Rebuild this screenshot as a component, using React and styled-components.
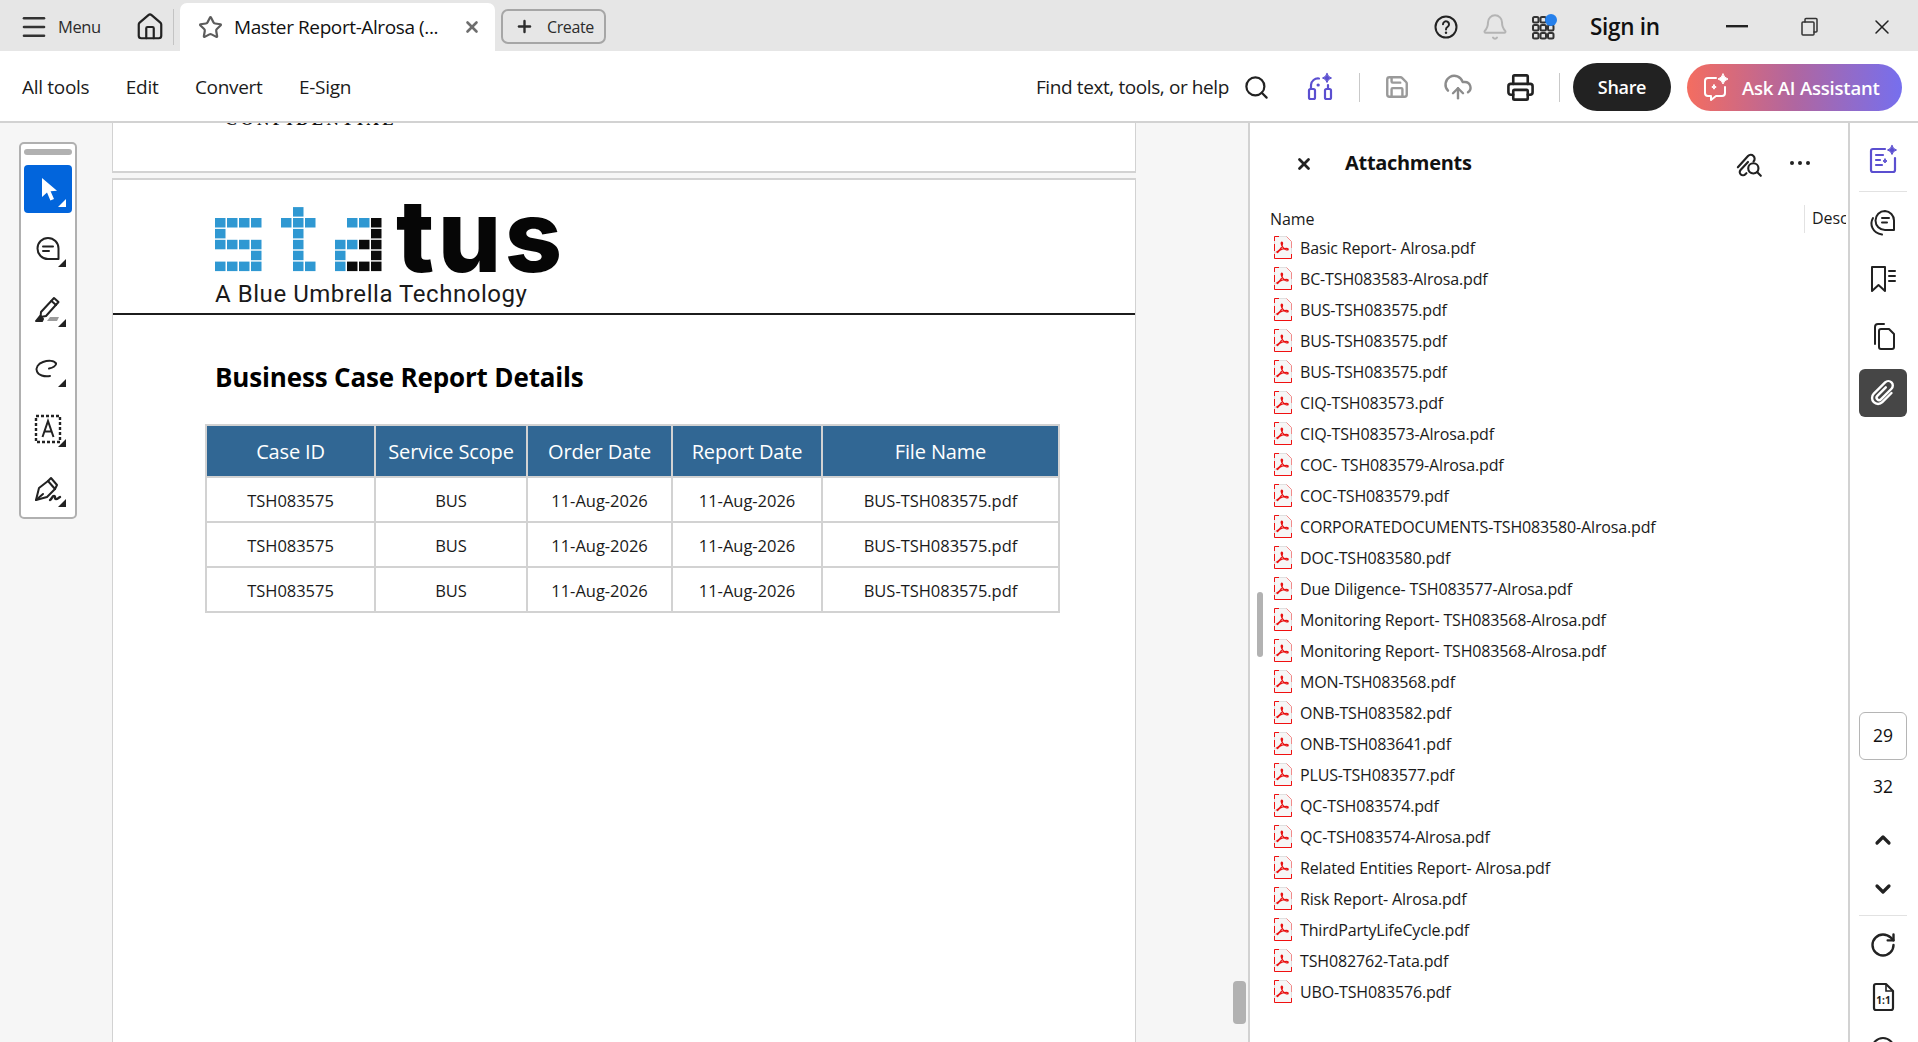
import React from "react";
import styled, { createGlobalStyle } from "styled-components";
import {
  Menu,
  Home,
  Star,
  X,
  Plus,
  Search,
  Save,
  CloudUpload,
  Printer,
  Bell,
  ChevronUp,
  ChevronDown,
  RotateCw,
} from "lucide-react";

const UI_FONT = `"Open Sans", "Noto Sans", sans-serif`;

const GlobalStyle = createGlobalStyle`
  html, body {
    margin: 0;
    padding: 0;
    height: 100%;
    overflow: hidden;
    font-family: ${UI_FONT};
    color: #111;
    background: #fff;
  }
  * { box-sizing: border-box; }
`;

const Shell = styled.div`
  width: 1918px;
  height: 1042px;
  display: flex;
  flex-direction: column;
  overflow: hidden;
`;

/* ---- title bar ---- */
const TitleBar = styled.div`
  height: 51px;
  flex: none;
  padding-top: 2px;
  display: flex;
  align-items: center;
  background: #e6e6e6;
`;
const MenuButton = styled.div`
  width: 127px;
  height: 100%;
  padding-left: 19px;
  display: flex;
  align-items: center;
  gap: 9px;
  font-size: 16.5px;
  letter-spacing: -0.4px;
  color: #2c2c2c;
`;
const HomeButton = styled.div`
  width: 46px;
  display: flex;
  justify-content: center;
`;
const TitleDivider = styled.div`
  width: 1px;
  height: 36px;
  margin-right: 6px;
  background: #c4c4c4;
`;
const Tab = styled.div`
  width: 315px;
  height: 48px;
  align-self: flex-end;
  padding: 0 14px 0 18px;
  display: flex;
  align-items: center;
  background: #fff;
  border-radius: 7px 7px 0 0;
`;
const TabTitle = styled.div`
  flex: 1;
  margin-left: 11px;
  font-size: 19px;
  letter-spacing: -0.4px;
  white-space: nowrap;
  color: #111;
`;
const CreateButton = styled.div`
  width: 105px;
  height: 35px;
  margin-left: 6px;
  padding-left: 12px;
  display: flex;
  align-items: center;
  gap: 13px;
  font-size: 16px;
  letter-spacing: -0.4px;
  color: #2c2c2c;
  border: 2px solid #a6a6a6;
  border-radius: 7px;
`;
const Spacer = styled.div`
  flex: 1;
`;
const TitleIcon = styled.div`
  width: 49px;
  display: flex;
  justify-content: center;
`;
const SignIn = styled.div`
  width: 110px;
  margin-left: 22px;
  font-size: 22.5px;
  font-weight: 600;
  letter-spacing: -0.3px;
  color: #111;
`;
const WindowButton = styled.div`
  width: ${({ $w }) => $w}px;
  display: flex;
  justify-content: center;
`;

/* ---- tool bar ---- */
const ToolBar = styled.div`
  height: 72px;
  flex: none;
  padding: 2px 16px 0 22px;
  display: flex;
  align-items: center;
  background: #fff;
  border-bottom: 2px solid #d2d2d2;
`;
const NavLink = styled.div`
  font-size: 19px;
  letter-spacing: -0.3px;
  margin-right: 36.5px;
  color: #1b1b1b;
`;
const FindText = styled.div`
  font-size: 19px;
  letter-spacing: -0.4px;
  color: #1b1b1b;
`;
const ToolSlot = styled.div`
  width: 40px;
  margin-left: ${({ $ml }) => $ml}px;
  display: flex;
  justify-content: center;
`;
const BarDivider = styled.div`
  width: 1px;
  height: 29px;
  margin-left: ${({ $ml }) => $ml}px;
  background: #c9c9c9;
`;
const ShareButton = styled.div`
  width: 98px;
  height: 48px;
  margin-left: 13px;
  display: flex;
  align-items: center;
  justify-content: center;
  font-size: 18px;
  font-weight: 600;
  letter-spacing: -0.3px;
  color: #fff;
  background: #222;
  border-radius: 24px;
`;
const AskButton = styled.div`
  width: 215px;
  height: 47px;
  margin-left: 16px;
  padding-left: 15px;
  display: flex;
  align-items: center;
  gap: 10px;
  font-size: 18.5px;
  font-weight: 600;
  letter-spacing: -0.2px;
  white-space: nowrap;
  color: #fff;
  background: linear-gradient(90deg, #f46d60 0%, #b066a0 50%, #766fee 100%);
  border-radius: 24px;
`;

/* ---- body ---- */
const Body = styled.div`
  flex: 1;
  min-height: 0;
  display: flex;
`;
const DocArea = styled.div`
  position: relative;
  width: 1248px;
  flex: none;
  display: flex;
  background: #f6f6f6;
  overflow: hidden;
`;
const ToolColumn = styled.div`
  width: 112px;
  flex: none;
  padding: 19px 0 0 19px;
`;
const FloatBar = styled.div`
  width: 58px;
  height: 377px;
  padding: 5px 3px 0;
  display: flex;
  flex-direction: column;
  gap: 12px;
  background: #fff;
  border: 2px solid #b0b0b0;
  border-radius: 5px;
`;
const Handle = styled.div`
  height: 6px;
  margin-bottom: -2px;
  background: #b1b1b1;
  border-radius: 3px;
`;
const FloatTool = styled.div`
  position: relative;
  height: 48px;
  display: flex;
  align-items: center;
  justify-content: center;
  background: ${({ $active }) => ($active ? "#0265dc" : "transparent")};
  border-radius: 4px;
  &::after {
    content: "";
    position: absolute;
    right: 6px;
    bottom: 6px;
    border-style: solid;
    border-width: 0 0 8px 8px;
    border-color: transparent transparent ${({ $active }) => ($active ? "#fff" : "#222")} transparent;
  }
`;
const PageColumn = styled.div`
  width: 1024px;
  flex: none;
`;
const PageStub = styled.div`
  height: 50px;
  overflow: hidden;
  background: #fff;
  border: 1px solid #d2d2d2;
  border-width: 0 1px 2px;
`;
const StubText = styled.div`
  margin: -15px 0 0 112px;
  font-family: "Liberation Serif", serif;
  font-size: 17px;
  font-weight: 700;
  letter-spacing: 3.3px;
  line-height: 24px;
  color: #111;
`;
const Page = styled.div`
  height: 900px;
  margin-top: 5px;
  background: #fff;
  border: 1px solid #d2d2d2;
  border-top-width: 2px;
`;
const PageHeader = styled.div`
  height: 135px;
  padding: 20px 0 0 102px;
  border-bottom: 2px solid #1c1c1c;
`;
const Logo = styled.svg`
  display: block;
  width: 350px;
  height: 78px;
`;
const Tagline = styled.div`
  margin-top: 2px;
  font-family: Roboto, sans-serif;
  font-size: 24px;
  letter-spacing: 0.55px;
  line-height: 28px;
  color: #1a1a1a;
`;
const ReportTitle = styled.div`
  margin: 44px 0 0 102px;
  font-size: 26px;
  font-weight: 700;
  letter-spacing: -0.16px;
  line-height: 36px;
  color: #000;
`;
const ReportTable = styled.table`
  width: 853px;
  margin: 29px 0 0 92px;
  border-collapse: collapse;
  table-layout: fixed;
  border: 2px solid #d2d2d2;
`;
const HeadCell = styled.th`
  height: 52px;
  padding: 0;
  width: ${({ $w }) => $w}px;
  font-size: 20px;
  font-weight: 400;
  letter-spacing: -0.15px;
  color: #fff;
  background: #316794;
  border: 2px solid #d2d2d2;
`;
const Cell = styled.td`
  height: 45px;
  padding: 2px 0 0;
  text-align: center;
  font-size: 16.5px;
  letter-spacing: -0.03px;
  color: #1a1a1a;
  border: 2px solid #d2d2d2;
`;
const Thumb = styled.div`
  position: absolute;
  left: ${({ $x }) => $x}px;
  top: ${({ $y }) => $y}px;
  width: ${({ $w }) => $w}px;
  height: ${({ $h }) => $h}px;
  background: #b2b2b2;
  border-radius: 4px;
`;

/* ---- attachments ---- */
const Panel = styled.div`
  position: relative;
  width: 602px;
  flex: none;
  background: #fff;
  border-left: 2px solid #d2d2d2;
  border-right: 2px solid #d2d2d2;
`;
const PanelHead = styled.div`
  height: 81px;
  display: flex;
  align-items: center;
`;
const PanelClose = styled.div`
  width: 95px;
  padding-left: 45px;
  display: flex;
`;
const PanelTitle = styled.div`
  flex: 1;
  padding-bottom: 3px;
  font-size: 20px;
  font-weight: 700;
  letter-spacing: -0.3px;
  color: #111;
`;
const PanelIcon = styled.div`
  width: 50px;
  padding: 0 ${({ $pr }) => $pr || 0}px 2px 0;
  display: flex;
  align-items: center;
  justify-content: center;
`;
const PanelActions = styled.div`
  display: flex;
  margin-right: 23px;
`;
const ColumnHead = styled.div`
  height: 28px;
  padding: 2px 0 0 20px;
  display: flex;
  align-items: center;
  font-size: 16px;
  letter-spacing: -0.1px;
  color: #1a1a1a;
`;
const NameHead = styled.div`
  width: 534px;
`;
const DescHead = styled.div`
  width: 42px;
  height: 28px;
  padding-left: 7px;
  overflow: hidden;
  line-height: 26px;
  white-space: nowrap;
  border-left: 1px solid #e2e2e2;
`;
const FileRow = styled.div`
  height: 31px;
  padding-left: 24px;
  display: flex;
  align-items: center;
  gap: 8px;
  font-size: 16px;
  letter-spacing: -0.15px;
  white-space: nowrap;
  color: #1a1a1a;
`;

/* ---- right rail ---- */
const Rail = styled.div`
  width: 68px;
  flex: none;
  display: flex;
  flex-direction: column;
  align-items: center;
  padding: 12px 2px 0 0;
`;
const RailSlot = styled.div`
  width: 48px;
  height: 48px;
  flex: none;
  margin-top: ${({ $mt }) => $mt || 0}px;
  padding-bottom: ${({ $text }) => ($text ? 2 : 0)}px;
  display: flex;
  align-items: center;
  justify-content: center;
  font-size: 17.5px;
  line-height: 20px;
  color: #111;
  background: ${({ $active }) => ($active ? "#464646" : "transparent")};
  border: ${({ $boxed }) => ($boxed ? "1.5px solid #b5b5b5" : "0")};
  border-radius: 6px;
`;
const RailDivider = styled.div`
  width: 48px;
  height: 1px;
  flex: none;
  margin-top: ${({ $mt }) => $mt}px;
  background: #e2e2e2;
`;

/* ---- drawn icons ---- */
const Draw = ({ size = 26, w, h, box = "0 0 26 26", color = "#222", sw = 2, children }) => (
  <svg
    width={w || size}
    height={h || size}
    viewBox={box}
    fill="none"
    stroke={color}
    strokeWidth={sw}
    strokeLinecap="round"
    strokeLinejoin="round"
  >
    {children}
  </svg>
);

const Sparkle = ({ x, y, r, color }) => (
  <path
    d={`M${x} ${y - r}q${r * 0.2} ${r * 0.8} ${r} ${r}q-${r * 0.8} ${r * 0.2} -${r} ${r}q-${r * 0.2} -${r * 0.8} -${r} -${r}q${r * 0.8} -${r * 0.2} ${r} -${r}z`}
    fill={color}
    stroke={color}
    strokeWidth="1"
  />
);

const HelpIcon = () => (
  <Draw size={24} box="0 0 24 24" color="#222">
    <circle cx="12" cy="12" r="10.5" />
    <path d="M9 9.3a3 3 0 1 1 4.7 2.5c-1.2.8-1.7 1.4-1.7 2.6" />
    <path d="M12 17.6v.2" strokeWidth="2.4" />
  </Draw>
);

const AppsIcon = () => (
  <svg width="26" height="26" viewBox="0 0 26 26">
    {[0, 1, 2].flatMap((r) =>
      [0, 1, 2].map((c) =>
        r === 0 && c === 2 ? null : (
          <rect
            key={`${r}-${c}`}
            x={2 + c * 7.5}
            y={3 + r * 8}
            width="5.5"
            height="5.5"
            rx="1.5"
            fill="none"
            stroke="#333"
            strokeWidth="2"
          />
        )
      )
    )}
    <circle cx="20" cy="6" r="6" fill="#2680eb" />
  </svg>
);

const RestoreIcon = () => (
  <Draw size={20} box="0 0 20 20" color="#333" sw={1.5}>
    <rect x="2" y="5" width="12" height="13" rx="1" />
    <path d="M5 5V2.5a1 1 0 0 1 1-1h10a1 1 0 0 1 1 1V14a1 1 0 0 1-1 1h-2" />
  </Draw>
);

const BottlesIcon = () => (
  <Draw size={30} box="0 0 30 30" color="#5b4fd0" sw={2.2}>
    <rect x="3" y="17" width="6" height="10" rx="1.5" />
    <rect x="19" y="17" width="6" height="10" rx="1.5" />
    <path d="M5 17v-4a7 7 0 0 1 8-6.5" />
    <path d="M12 13h.3" strokeWidth="3" />
    <path d="M22 17v-4" />
    <Sparkle x={21} y={6} r={4.5} color="#5b4fd0" />
  </Draw>
);

const AssistantIcon = () => (
  <Draw size={30} box="0 0 30 30" color="#fff" sw={2}>
    <path d="M14 6H6a3 3 0 0 0-3 3v12a3 3 0 0 0 3 3h3v4l5-4h6a3 3 0 0 0 3-3v-6" />
    <Sparkle x={21} y={7} r={5} color="#fff" />
    <Sparkle x={12} y={15} r={2.2} color="#fff" />
  </Draw>
);

const PointerIcon = () => (
  <svg width="24" height="30" viewBox="0 0 24 30">
    <path d="M6 4l0 19 5-4.5 3.4 8 3.6-1.6-3.4-7.6 6.4-.6z" fill="#fff" />
  </svg>
);

const CommentIcon = () => (
  <Draw size={28} box="0 0 28 28">
    <path d="M14 3a10.5 10.5 0 1 0 0 21h10.5V13.5A10.5 10.5 0 0 0 14 3z" />
    <path d="M9 11.5h10M9 16h6" />
  </Draw>
);

const HighlightIcon = () => (
  <Draw size={30} box="0 0 30 30">
    <path d="M8 18L21 4l4.5 4L13 22l-5.5 1z" />
    <path d="M18.5 7l4.5 4" />
    <path d="M3 27l4-5 3 3-1 2z" fill="#222" />
    <path d="M14 27l3-4h9l-2 4z" fill="#9c9c9c" stroke="none" />
  </Draw>
);

const LassoIcon = () => (
  <Draw size={30} box="0 0 30 30">
    <path d="M23 9.5C21.5 6.5 15.5 6 10 8 5 9.8 2.6 13.5 4 17.5c1.3 3.5 7 5.5 13 4.5" />
    <path d="M23 9.5c.5 2-3 4.3-7 5" />
  </Draw>
);

const TextBoxIcon = () => (
  <svg width="28" height="30" viewBox="0 0 28 30">
    <rect x="2" y="2" width="24" height="26" fill="none" stroke="#222" strokeWidth="2.4" strokeDasharray="3 2" />
    <path d="M8.5 23L14 7l5.5 16M10.5 17.5h7" fill="none" stroke="#222" strokeWidth="2" />
  </svg>
);

const SignIcon = () => (
  <Draw size={30} box="0 0 30 30">
    <path d="M3 26l3-12 9-7 7 8-8 8z" />
    <path d="M15 7l3-3 6 7-2 4" />
    <path d="M3 26l7-6" />
    <path d="M17 26c2-1 2-4 4-4s0 3 2 3 2-1 4-2" strokeWidth="2.4" />
  </Draw>
);

const PaperclipSearch = () => (
  <Draw size={32} box="0 0 30 30">
    <path d="M15 14l-7 7.5a3 3 0 0 0 4.5 4l1-1" />
    <path d="M5.5 19L15 8.5a3.6 3.6 0 0 1 5.2 5" />
    <circle cx="20" cy="20" r="4.8" />
    <path d="M23.5 23.5l3.5 3.5" />
  </Draw>
);

const DotsIcon = () => (
  <svg width="22" height="6" viewBox="0 0 22 6">
    <circle cx="3" cy="3" r="2" fill="#222" />
    <circle cx="11" cy="3" r="2" fill="#222" />
    <circle cx="19" cy="3" r="2" fill="#222" />
  </svg>
);

const ReportSparkIcon = () => (
  <Draw size={30} box="0 0 30 30" color="#5b4fd0" sw={2.2}>
    <path d="M17 5H5a2 2 0 0 0-2 2v19a2 2 0 0 0 2 2h20a2 2 0 0 0 2-2V14" />
    <path d="M8 11h7M8 16h4M8 21h6" />
    <Sparkle x={17} y={17} r={2} color="#5b4fd0" />
    <Sparkle x={24} y={6} r={4.5} color="#5b4fd0" />
  </Draw>
);

const StackedComment = () => (
  <Draw size={28} box="0 0 28 28">
    <path d="M16 3a9.5 9.5 0 0 0 0 19h9V12.5A9.5 9.5 0 0 0 16 3z" />
    <path d="M13 10h7M13 14.5h5" />
    <path d="M4 10c-3.5 6-1 15 9 16.5" />
  </Draw>
);

const BookmarkList = () => (
  <Draw size={28} box="0 0 28 28">
    <path d="M3 2h13v24l-6.5-6L3 26z" />
    <path d="M20 6h6M20 11h6M20 16h6" />
  </Draw>
);

const PagesIcon = () => (
  <Draw size={28} box="0 0 28 28">
    <path d="M6 22V5a3 3 0 0 1 3-3h6" />
    <path d="M10 9a2 2 0 0 1 2-2h8l5 5v13a2 2 0 0 1-2 2H12a2 2 0 0 1-2-2z" />
  </Draw>
);

const ClipIcon = () => (
  <Draw size={30} box="0 0 30 30" color="#fff" sw={2.4}>
    <path
      transform="rotate(45 15 15)"
      d="M13 9v12a2.500 2.500 0 0 0 5 0V6a4.500 4.500 0 0 0-9 0v16a6 6 0 0 0 12 0V9"
    />
  </Draw>
);

const ActualSizeIcon = () => (
  <svg width="24" height="30" viewBox="0 0 24 30">
    <path d="M3 4a2 2 0 0 1 2-2h10l7 7v17a2 2 0 0 1-2 2H5a2 2 0 0 1-2-2z" fill="none" stroke="#222" strokeWidth="2.2" strokeLinejoin="round" />
    <path d="M15 2v7h7" fill="none" stroke="#222" strokeWidth="1.6" />
    <text x="12.5" y="22" textAnchor="middle" fontSize="10" fontWeight="700" fontFamily="Open Sans, sans-serif" fill="#222">1:1</text>
  </svg>
);

const PartialCircle = () => (
  <Draw size={26} box="0 0 26 26">
    <circle cx="13" cy="13" r="11" />
  </Draw>
);

const PdfIcon = () => (
  <svg width="18" height="23" viewBox="0 0 18 23" style={{ flex: "none" }}>
    <path d="M.5.5h12l5 5v17H.5z" fill="#f6f6f6" stroke="#e0e0e0" />
    <path d="M5 .5H.5V5M.5 18v4.500H17.500V18M.5 8v7" fill="none" stroke="#f01010" />
    <path d="M12.500.5L17.500 5.500V12" fill="none" stroke="#f28a8a" />
    <path
      d="M3.500 15.500c2.500-1.500 4.700-4.700 5-8 .1-1.800-1.500-1.800-1.300 0 .4 3 3 6 5.300 6.400 2 .3 2.300-1.500.3-1.500-2.700 0-6.600 1.300-8.800 3.300-1.200 1.100-.9 1.500.5-.2z"
      fill="none"
      stroke="#e81010"
      strokeWidth="1.300"
    />
  </svg>
);

/* ---- logo squares, [col, row, black] ---- */
const S_CELLS = [
  [0, 0], [1, 0], [2, 0], [3, 0], [0, 1], [0, 2], [1, 2], [2, 2], [3, 2], [3, 3], [0, 4], [1, 4], [2, 4], [3, 4],
];
const T_CELLS = [
  [1, -1], [0, 0], [1, 0], [2, 0], [1, 1], [1, 2], [1, 3], [1, 4], [2, 4],
];
const A_CELLS = [
  [1, 0], [2, 0], [3, 0, 1], [3, 1, 1], [0, 2], [1, 2], [2, 2, 1], [3, 2, 1], [0, 3], [3, 3, 1], [0, 4], [1, 4, 1], [2, 4, 1], [3, 4, 1],
];

const LogoCells = ({ cells, x }) =>
  cells.map(([c, r, black]) => (
    <rect
      key={`${c}${r}`}
      x={x + c * 12}
      y={18 + r * 10.9}
      width="10.500"
      height="9.500"
      fill={black ? "#0b0b0b" : "#2f98d2"}
    />
  ));

const StatusLogo = () => (
  <Logo viewBox="0 0 350 78">
    <LogoCells cells={S_CELLS} x={0} />
    <LogoCells cells={T_CELLS} x={66} />
    <LogoCells cells={A_CELLS} x={120} />
    <text x="181" y="72" fontFamily="Inter, sans-serif" fontWeight="800" fontSize="100" letterSpacing="3.5" fill="#060606">
      tus
    </text>
  </Logo>
);

const FILES = [
  "Basic Report- Alrosa.pdf",
  "BC-TSH083583-Alrosa.pdf",
  "BUS-TSH083575.pdf",
  "BUS-TSH083575.pdf",
  "BUS-TSH083575.pdf",
  "CIQ-TSH083573.pdf",
  "CIQ-TSH083573-Alrosa.pdf",
  "COC- TSH083579-Alrosa.pdf",
  "COC-TSH083579.pdf",
  "CORPORATEDOCUMENTS-TSH083580-Alrosa.pdf",
  "DOC-TSH083580.pdf",
  "Due Diligence- TSH083577-Alrosa.pdf",
  "Monitoring Report- TSH083568-Alrosa.pdf",
  "Monitoring Report- TSH083568-Alrosa.pdf",
  "MON-TSH083568.pdf",
  "ONB-TSH083582.pdf",
  "ONB-TSH083641.pdf",
  "PLUS-TSH083577.pdf",
  "QC-TSH083574.pdf",
  "QC-TSH083574-Alrosa.pdf",
  "Related Entities Report- Alrosa.pdf",
  "Risk Report- Alrosa.pdf",
  "ThirdPartyLifeCycle.pdf",
  "TSH082762-Tata.pdf",
  "UBO-TSH083576.pdf",
];

const COLUMNS = [
  ["Case ID", 169],
  ["Service Scope", 152],
  ["Order Date", 145],
  ["Report Date", 150],
  ["File Name", 237],
];

const App = () => {
  return (
    <Shell>
      <GlobalStyle />
      <TitleBar>
        <MenuButton>
          <Menu size={30} color="#333" strokeWidth={2.6} absoluteStrokeWidth />
          Menu
        </MenuButton>
        <HomeButton>
          <Home size={30} color="#222" strokeWidth={2.2} absoluteStrokeWidth />
        </HomeButton>
        <TitleDivider />
        <Tab>
          <Star size={25} color="#5c5c5c" strokeWidth={2.2} absoluteStrokeWidth />
          <TabTitle>Master Report-Alrosa (...</TabTitle>
          <X size={18} color="#6e6e6e" strokeWidth={2.6} absoluteStrokeWidth />
        </Tab>
        <CreateButton>
          <Plus size={19} color="#2c2c2c" strokeWidth={2.4} absoluteStrokeWidth />
          Create
        </CreateButton>
        <Spacer />
        <TitleIcon>
          <HelpIcon />
        </TitleIcon>
        <TitleIcon>
          <Bell size={28} color="#b4b4b4" strokeWidth={2} absoluteStrokeWidth />
        </TitleIcon>
        <TitleIcon>
          <AppsIcon />
        </TitleIcon>
        <SignIn>Sign in</SignIn>
        <WindowButton $w={73}>
          <svg width="22" height="3" viewBox="0 0 22 3">
            <rect width="22" height="2.400" fill="#222" />
          </svg>
        </WindowButton>
        <WindowButton $w={73}>
          <RestoreIcon />
        </WindowButton>
        <WindowButton $w={72}>
          <X size={24} color="#222" strokeWidth={1.5} absoluteStrokeWidth />
        </WindowButton>
      </TitleBar>

      <ToolBar>
        <NavLink>All tools</NavLink>
        <NavLink>Edit</NavLink>
        <NavLink>Convert</NavLink>
        <NavLink>E-Sign</NavLink>
        <Spacer />
        <FindText>Find text, tools, or help</FindText>
        <ToolSlot $ml={7}>
          <Search size={27} color="#222" strokeWidth={2.2} absoluteStrokeWidth />
        </ToolSlot>
        <ToolSlot $ml={25}>
          <BottlesIcon />
        </ToolSlot>
        <BarDivider $ml={18} />
        <ToolSlot $ml={17}>
          <Save size={26} color="#9a9a9a" strokeWidth={2.4} absoluteStrokeWidth />
        </ToolSlot>
        <ToolSlot $ml={21}>
          <CloudUpload size={30} color="#8c8c8c" strokeWidth={2.4} absoluteStrokeWidth />
        </ToolSlot>
        <ToolSlot $ml={22}>
          <Printer size={29} color="#222" strokeWidth={2.6} absoluteStrokeWidth />
        </ToolSlot>
        <BarDivider $ml={19} />
        <ShareButton>Share</ShareButton>
        <AskButton>
          <AssistantIcon />
          Ask AI Assistant
        </AskButton>
      </ToolBar>

      <Body>
        <DocArea>
          <ToolColumn>
            <FloatBar>
              <Handle />
              <FloatTool $active>
                <PointerIcon />
              </FloatTool>
              <FloatTool>
                <CommentIcon />
              </FloatTool>
              <FloatTool>
                <HighlightIcon />
              </FloatTool>
              <FloatTool>
                <LassoIcon />
              </FloatTool>
              <FloatTool>
                <TextBoxIcon />
              </FloatTool>
              <FloatTool>
                <SignIcon />
              </FloatTool>
            </FloatBar>
          </ToolColumn>
          <PageColumn>
            <PageStub>
              <StubText>CONFIDENTIAL</StubText>
            </PageStub>
            <Page>
              <PageHeader>
                <StatusLogo />
                <Tagline>A Blue Umbrella Technology</Tagline>
              </PageHeader>
              <ReportTitle>Business Case Report Details</ReportTitle>
              <ReportTable>
                <thead>
                  <tr>
                    {COLUMNS.map(([label, width]) => (
                      <HeadCell key={label} $w={width}>
                        {label}
                      </HeadCell>
                    ))}
                  </tr>
                </thead>
                <tbody>
                  {[0, 1, 2].map((row) => (
                    <tr key={row}>
                      <Cell>TSH083575</Cell>
                      <Cell>BUS</Cell>
                      <Cell>11-Aug-2026</Cell>
                      <Cell>11-Aug-2026</Cell>
                      <Cell>BUS-TSH083575.pdf</Cell>
                    </tr>
                  ))}
                </tbody>
              </ReportTable>
            </Page>
          </PageColumn>
          <Thumb $x={1233} $y={858} $w={13} $h={43} />
        </DocArea>

        <Panel>
          <PanelHead>
            <PanelClose>
              <X size={18} color="#222" strokeWidth={2.8} absoluteStrokeWidth />
            </PanelClose>
            <PanelTitle>Attachments</PanelTitle>
            <PanelActions>
              <PanelIcon $pr={4}>
                <PaperclipSearch />
              </PanelIcon>
              <PanelIcon>
                <DotsIcon />
              </PanelIcon>
            </PanelActions>
          </PanelHead>
          <ColumnHead>
            <NameHead>Name</NameHead>
            <DescHead>Description</DescHead>
          </ColumnHead>
          {FILES.map((name, index) => (
            <FileRow key={index}>
              <PdfIcon />
              {name}
            </FileRow>
          ))}
          <Thumb $x={7} $y={469} $w={6} $h={65} />
        </Panel>

        <Rail>
          <RailSlot>
            <ReportSparkIcon />
          </RailSlot>
          <RailDivider $mt={8} />
          <RailSlot $mt={6}>
            <StackedComment />
          </RailSlot>
          <RailSlot $mt={9}>
            <BookmarkList />
          </RailSlot>
          <RailSlot $mt={9}>
            <PagesIcon />
          </RailSlot>
          <RailSlot $mt={9} $active>
            <ClipIcon />
          </RailSlot>
          <RailSlot $mt={295} $boxed $text>
            29
          </RailSlot>
          <RailSlot $mt={3} $text>
            32
          </RailSlot>
          <RailSlot $mt={5}>
            <ChevronUp size={24} color="#222" strokeWidth={3.2} absoluteStrokeWidth />
          </RailSlot>
          <RailSlot $mt={1}>
            <ChevronDown size={24} color="#222" strokeWidth={3.2} absoluteStrokeWidth />
          </RailSlot>
          <RailDivider $mt={2} />
          <RailSlot $mt={5}>
            <RotateCw size={28} color="#222" strokeWidth={2.4} absoluteStrokeWidth />
          </RailSlot>
          <RailSlot $mt={4}>
            <ActualSizeIcon />
          </RailSlot>
          <RailSlot $mt={4}>
            <PartialCircle />
          </RailSlot>
        </Rail>
      </Body>
    </Shell>
  );
};

export default App;
